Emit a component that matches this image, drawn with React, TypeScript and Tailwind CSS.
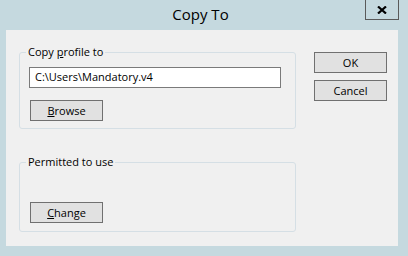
import React from "react";

const font = { fontFamily: '"Open Sans", "Noto Sans", Arial, sans-serif' };

function Btn({ children, className = "" }: { children: React.ReactNode; className?: string }) {
  return (
    <button
      className={`w-[73px] h-[21px] border border-[#707070] bg-[#e1e1e1] text-[11px] leading-none text-black flex items-center justify-center ${className}`}
    >
      {children}
    </button>
  );
}

function Group({ label, children, className = "" }: { label: React.ReactNode; children: React.ReactNode; className?: string }) {
  return (
    <fieldset className={`border border-[#d5dfe5] rounded-[3px] m-0 p-0 ${className}`}>
      <legend className="ml-[6px] px-[2px] text-[11px] leading-[14px] text-black">{label}</legend>
      {children}
    </fieldset>
  );
}

export default function App() {
  return (
    <div className="w-[408px] h-[256px] bg-[#c5d9df] flex flex-col overflow-hidden" style={font}>
      <div className="h-[30px] flex items-start shrink-0">
        <div className="flex-1 pl-[36px] text-center text-[15px] leading-[20px] pt-[4px] text-black">Copy To</div>
        <div className="w-[34px] h-[21px] -mt-[1px] mr-[9px] border border-[#5a5a5a] flex items-center justify-center">
          <svg width="10" height="8" viewBox="0 0 10 8">
            <path d="M1 0.5 L9 7.5 M9 0.5 L1 7.5" stroke="#000" strokeWidth="2.2" />
          </svg>
        </div>
      </div>
      <div className="ml-[6px] w-[392px] h-[216px] bg-[#f0f0f0] flex pl-[13px] pt-[15px]">
        <div className="w-[277px] flex flex-col gap-[26px]">
          <Group label={<>Copy <span className="underline">p</span>rofile to</>} className="h-[84px]">
            <div className="pl-[9px] pt-[8px] flex flex-col gap-[12px]">
              <div className="w-[252px] h-[21px] bg-white border border-[#7a7a7a] flex items-center px-[5px] text-[11px]">
                C:\Users\Mandatory.v4
              </div>
              <Btn className="ml-[1px]"><span className="underline">B</span>rowse</Btn>
            </div>
          </Group>
          <Group label="Permitted to use" className="h-[77px]">
            <div className="pl-[10px] pt-[33px]">
              <Btn><span className="underline">C</span>hange</Btn>
            </div>
          </Group>
        </div>
        <div className="ml-[18px] pt-[7px] flex flex-col gap-[7px]">
          <Btn>OK</Btn>
          <Btn>Cancel</Btn>
        </div>
      </div>
    </div>
  );
}
